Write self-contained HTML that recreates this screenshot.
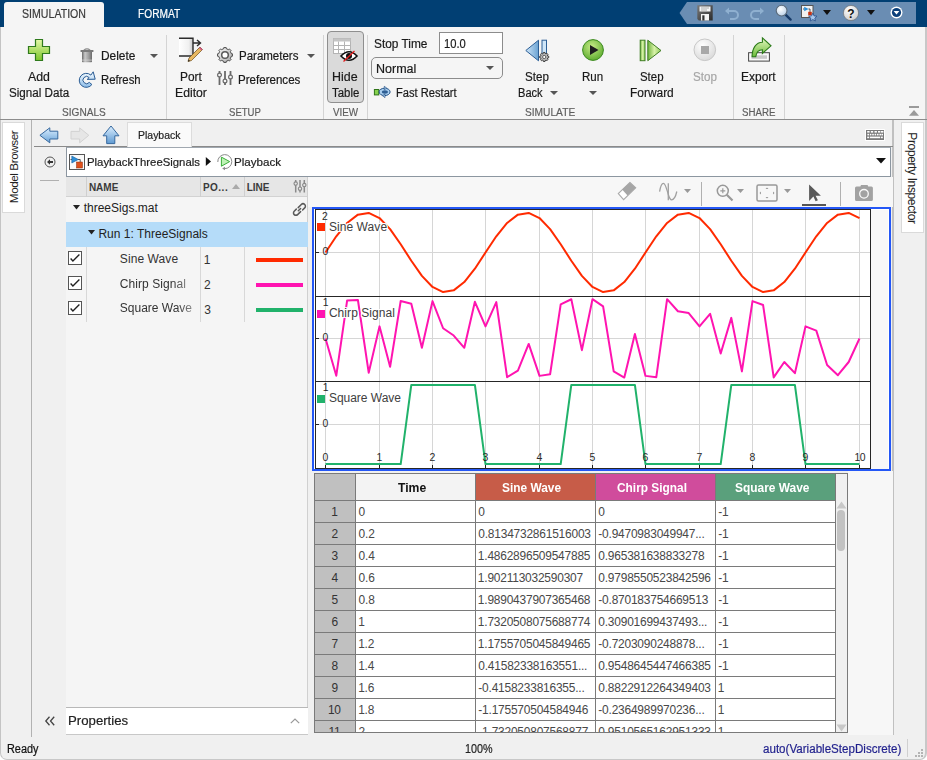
<!DOCTYPE html><html><head><meta charset="utf-8"><style>
html,body{margin:0;padding:0}
body{width:927px;height:760px;overflow:hidden;position:relative;background:#fff;font-family:"Liberation Sans", sans-serif}
.t{position:absolute;white-space:nowrap}
.b{position:absolute;box-sizing:border-box}
svg.b{overflow:visible}

</style></head><body>
<div class="b" style="left:0px;top:20px;width:927px;height:740px;background:#f0f0f0;border-left:1px solid #c4c4c4;border-right:2px solid #c8c8c8;border-bottom:1px solid #c8c8c8;border-radius:0 0 7px 7px"></div>
<div class="b" style="left:0px;top:0px;width:927px;height:27px;background:#013f73"></div>
<div class="b" style="left:4px;top:2px;width:100px;height:25px;background:#f5f5f5;border-radius:3px 3px 0 0"></div>
<div class="t" style="left:22.07px;top:6.11px;font-size:12.35px;line-height:16px;transform:scaleX(0.8587);transform-origin:0 0;color:#3a3a3a;font-weight:normal;-webkit-text-stroke:0.2px #3a3a3a;">SIMULATION</div>
<div class="t" style="left:138.28px;top:6.11px;font-size:12.35px;line-height:16px;transform:scaleX(0.8274);transform-origin:0 0;color:#ffffff;font-weight:normal;-webkit-text-stroke:0.2px #ffffff;">FORMAT</div>
<svg class="b" style="left:679px;top:1px" width="238" height="23" viewBox="0 0 238 23"><polygon points="0.5,12 8,1 237,1 237,23 8,23" fill="#6a8db3"/></svg>
<svg class="b" style="left:697px;top:5px" width="16" height="16" viewBox="0 0 16 16"><defs><linearGradient id="gsv" x1="0" y1="0" x2="1" y2="1"><stop offset="0" stop-color="#7a7a7a"/><stop offset="1" stop-color="#2a2a2a"/></linearGradient></defs><path d="M0.3,0.3 H15.7 V15.5 H1.8 L0.3,14Z" fill="url(#gsv)"/><rect x="2.5" y="1.5" width="11" height="5" fill="#f4f4f4"/><path d="M4,3 H12 M4,5 H10" stroke="#999" stroke-width=".8"/><rect x="4" y="9" width="8" height="6.5" fill="#f4f4f4"/><rect x="5.3" y="10.3" width="2.2" height="5.2" fill="#333"/></svg>
<svg class="b" style="left:724px;top:5px" width="16" height="16" viewBox="0 0 16 16"><path d="M4,6 H10 A4,4 0 0 1 10,14 H6" fill="none" stroke="#8fb0d0" stroke-width="2"/><path d="M1,6 L5,2.5 L5,9.5 Z" fill="#8fb0d0"/></svg>
<svg class="b" style="left:749px;top:5px" width="16" height="16" viewBox="0 0 16 16"><path d="M12,6 H6 A4,4 0 0 0 6,14 H10" fill="none" stroke="#8fb0d0" stroke-width="2"/><path d="M15,6 L11,2.5 L11,9.5 Z" fill="#8fb0d0"/></svg>
<svg class="b" style="left:775px;top:4px" width="17" height="17" viewBox="0 0 17 17"><defs><radialGradient id="gls" cx=".4" cy=".35" r=".7"><stop offset="0" stop-color="#ffffff"/><stop offset="1" stop-color="#b8d0e8"/></radialGradient></defs><path d="M9.8,9.8 L15.6,15.6" stroke="#163a68" stroke-width="2.4" stroke-linecap="round"/><circle cx="6.6" cy="6.6" r="5.4" fill="url(#gls)" stroke="#5a6a7a" stroke-width="1.1"/></svg>
<svg class="b" style="left:801px;top:5px" width="16" height="16" viewBox="0 0 16 16"><rect x="0.5" y="0.5" width="11.5" height="12" fill="#f2f2f2" stroke="#555"/><path d="M2,4 H3.5 M7.5,4 H9 V7" fill="none" stroke="#333" stroke-width=".8"/><path d="M3.2,1.8 L7.6,4 L3.2,6.2Z" fill="#2d8fd8"/><rect x="7.2" y="6.8" width="3.6" height="3.6" fill="#c83010"/><path d="M11.8,8.2 l1.3,2.7 2.9,.3 -2.2,2 .6,2.8 -2.6,-1.5 -2.6,1.5 .6,-2.8 -2.2,-2 2.9,-.3z" fill="#a8c8ec" stroke="#2a4f8a" stroke-width=".8"/></svg>
<svg class="b" style="left:823px;top:10px" width="8" height="5" viewBox="0 0 8 5"><path d="M0,0 H8 L4.0,5Z" fill="#111"/></svg>
<svg class="b" style="left:843px;top:5px" width="16" height="16" viewBox="0 0 16 16"><defs><radialGradient id="ghp" cx=".4" cy=".3" r=".8"><stop offset="0" stop-color="#ffffff"/><stop offset="1" stop-color="#c8c8c8"/></radialGradient></defs><circle cx="8" cy="8" r="7.6" fill="url(#ghp)" stroke="#666" stroke-width=".6"/><text x="8" y="12.5" font-family="Liberation Sans" font-weight="bold" font-size="12" text-anchor="middle" fill="#111">?</text></svg>
<svg class="b" style="left:867px;top:10px" width="8" height="5" viewBox="0 0 8 5"><path d="M0,0 H8 L4.0,5Z" fill="#111"/></svg>
<svg class="b" style="left:890px;top:6px" width="13" height="13" viewBox="0 0 13 13"><circle cx="6.5" cy="6.5" r="6" fill="#fff"/><circle cx="6.5" cy="6.5" r="4.6" fill="#0b3f7a"/><path d="M3.6,5 H9.4 L6.5,8.6Z" fill="#fff"/></svg>
<div class="b" style="left:1px;top:27px;width:924px;height:92px;background:#f5f5f5"></div>
<div class="b" style="left:0px;top:119px;width:927px;height:1px;background:#8c8c8c"></div>
<div class="b" style="left:166px;top:35px;width:1px;height:84px;background:#d4d4d4"></div>
<div class="b" style="left:323px;top:35px;width:1px;height:84px;background:#d4d4d4"></div>
<div class="b" style="left:367px;top:35px;width:1px;height:84px;background:#d4d4d4"></div>
<div class="b" style="left:733px;top:35px;width:1px;height:84px;background:#d4d4d4"></div>
<div class="b" style="left:784px;top:35px;width:1px;height:84px;background:#d4d4d4"></div>
<svg class="b" style="left:28px;top:39px" width="22" height="22" viewBox="0 0 22 22"><defs><linearGradient id="gp" x1="0" y1="0" x2="0" y2="1"><stop offset="0" stop-color="#e4f9a8"/><stop offset="1" stop-color="#7cc52a"/></linearGradient></defs><path d="M7.5,0.5 H14.5 V7.5 H21.5 V14.5 H14.5 V21.5 H7.5 V14.5 H0.5 V7.5 H7.5Z" fill="url(#gp)" stroke="#2f7a1c" stroke-width="1.2"/></svg>
<div class="t" style="left:28.40px;top:68.61px;font-size:12.65px;line-height:16px;transform:scaleX(0.9758);transform-origin:0 0;color:#1a1a1a;font-weight:normal;-webkit-text-stroke:0.2px #1a1a1a;">Add</div>
<div class="t" style="left:8.62px;top:84.61px;font-size:12.65px;line-height:16px;transform:scaleX(0.9205);transform-origin:0 0;color:#1a1a1a;font-weight:normal;-webkit-text-stroke:0.2px #1a1a1a;">Signal Data</div>
<svg class="b" style="left:80px;top:47px" width="14" height="16" viewBox="0 0 14 16"><defs><linearGradient id="gt" x1="0" y1="0" x2="1" y2="0"><stop offset="0" stop-color="#6a6a6a"/><stop offset=".3" stop-color="#c8c8c8"/><stop offset=".7" stop-color="#9a9a9a"/><stop offset="1" stop-color="#6a6a6a"/></linearGradient></defs><path d="M3.8,3.2 Q7,0.6 10.2,3.2" fill="none" stroke="#8a8a8a" stroke-width="1.1"/><rect x="0.4" y="3" width="13.2" height="2" rx="0.8" fill="#7a7a7a"/><path d="M2,5 H12 V14.6 Q12,15.3 11.3,15.3 H2.7 Q2,15.3 2,14.6Z" fill="url(#gt)"/><rect x="2" y="12.6" width="10" height="1" fill="#d8d8d8" opacity=".7"/></svg>
<div class="t" style="left:100.95px;top:47.61px;font-size:12.65px;line-height:16px;transform:scaleX(0.9421);transform-origin:0 0;color:#1a1a1a;font-weight:normal;-webkit-text-stroke:0.2px #1a1a1a;">Delete</div>
<svg class="b" style="left:150px;top:54px" width="8" height="4" viewBox="0 0 8 4"><path d="M0,0 H8 L4.0,4Z" fill="#555"/></svg>
<svg class="b" style="left:79px;top:71px" width="17" height="16" viewBox="0 0 17 16"><defs><linearGradient id="gr" x1="0" y1="0" x2="0" y2="1"><stop offset="0" stop-color="#f6fcff"/><stop offset="1" stop-color="#8dbde8"/></linearGradient></defs><path d="M11.9,4.1 A7,7 0 1 0 12.9,13.5 L10.3,11.4 A3.6,3.6 0 1 1 10.2,6.6 L8.2,8.4 L16.2,8.2 L14.2,0.8 Z" fill="url(#gr)" stroke="#2a5c94" stroke-width="1"/></svg>
<div class="t" style="left:101.00px;top:71.61px;font-size:12.65px;line-height:16px;transform:scaleX(0.8944);transform-origin:0 0;color:#1a1a1a;font-weight:normal;-webkit-text-stroke:0.2px #1a1a1a;">Refresh</div>
<div class="t" style="left:61.90px;top:104.47px;font-size:11.63px;line-height:15px;transform:scaleX(0.8681);transform-origin:0 0;color:#5e5e5e;font-weight:normal;-webkit-text-stroke:0.2px #5e5e5e;">SIGNALS</div>
<svg class="b" style="left:178px;top:37px" width="26" height="26" viewBox="0 0 26 26"><defs><linearGradient id="gd" x1="0" y1="0" x2="1" y2="0"><stop offset="0" stop-color="#ffffff"/><stop offset=".7" stop-color="#f0f0f0"/><stop offset="1" stop-color="#c8c8c8"/></linearGradient></defs><rect x="1" y="1" width="14" height="18" fill="url(#gd)"/><path d="M1,1.2 H15 V19 H1" fill="none" stroke="#2b2b2b" stroke-width="1.4"/><path d="M15,6 H22 M19,3 L22.5,6 L19,9" fill="none" stroke="#2b2b2b" stroke-width="1.4"/><path d="M10,24.5 L11,21 L22,10 L24.5,12.5 L13.5,23.5Z" fill="#e8b860" stroke="#6b4a1a" stroke-width=".7"/><path d="M21,11 L22,10 L24.5,12.5 L23.5,13.5Z" fill="#d0508a"/><path d="M10,24.5 L10.6,22.6 L12,24Z" fill="#222"/></svg>
<div class="t" style="left:180.05px;top:68.61px;font-size:12.65px;line-height:16px;transform:scaleX(0.9399);transform-origin:0 0;color:#1a1a1a;font-weight:normal;-webkit-text-stroke:0.2px #1a1a1a;">Port</div>
<div class="t" style="left:175.02px;top:84.61px;font-size:12.65px;line-height:16px;transform:scaleX(0.9665);transform-origin:0 0;color:#1a1a1a;font-weight:normal;-webkit-text-stroke:0.2px #1a1a1a;">Editor</div>
<svg class="b" style="left:217px;top:47px" width="16" height="16" viewBox="0 0 16 16"><defs><linearGradient id="gg" x1="0" y1="0" x2="1" y2="1"><stop offset="0" stop-color="#fafafa"/><stop offset="1" stop-color="#a8a8a8"/></linearGradient></defs><path d="M6.65,1.74 L6.77,0.60 L9.23,0.60 L9.35,1.74 L11.47,2.62 L12.36,1.90 L14.10,3.64 L13.38,4.53 L14.26,6.65 L15.40,6.77 L15.40,9.23 L14.26,9.35 L13.38,11.47 L14.10,12.36 L12.36,14.10 L11.47,13.38 L9.35,14.26 L9.23,15.40 L6.77,15.40 L6.65,14.26 L4.53,13.38 L3.64,14.10 L1.90,12.36 L2.62,11.47 L1.74,9.35 L0.60,9.23 L0.60,6.77 L1.74,6.65 L2.62,4.53 L1.90,3.64 L3.64,1.90 L4.53,2.62Z" fill="url(#gg)" stroke="#3a3a3a" stroke-width="0.9"/><circle cx="8" cy="8" r="3.3" fill="#fff" stroke="#5a5a5a" stroke-width="1.5"/></svg>
<div class="t" style="left:239.48px;top:47.61px;font-size:12.65px;line-height:16px;transform:scaleX(0.9098);transform-origin:0 0;color:#1a1a1a;font-weight:normal;-webkit-text-stroke:0.2px #1a1a1a;">Parameters</div>
<svg class="b" style="left:307px;top:54px" width="8" height="4" viewBox="0 0 8 4"><path d="M0,0 H8 L4.0,4Z" fill="#555"/></svg>
<svg class="b" style="left:217px;top:70px" width="16" height="16" viewBox="0 0 16 16"><g stroke="#6a6a6a" stroke-width="1.8"><path d="M2.5,1 V15 M8,1 V15 M13.5,1 V15"/></g><g fill="#f5f5f5" stroke="#6a6a6a" stroke-width="1.2"><circle cx="2.5" cy="5" r="1.9"/><circle cx="8" cy="11" r="1.9"/><circle cx="13.5" cy="7" r="1.9"/></g></svg>
<div class="t" style="left:238.37px;top:71.61px;font-size:12.65px;line-height:16px;transform:scaleX(0.9151);transform-origin:0 0;color:#1a1a1a;font-weight:normal;-webkit-text-stroke:0.2px #1a1a1a;">Preferences</div>
<div class="t" style="left:229.22px;top:104.47px;font-size:11.63px;line-height:15px;transform:scaleX(0.8227);transform-origin:0 0;color:#5e5e5e;font-weight:normal;-webkit-text-stroke:0.2px #5e5e5e;">SETUP</div>
<div class="b" style="left:327px;top:31px;width:37px;height:72px;background:#dadada;border:1px solid #8f8f8f;border-radius:4px"></div>
<svg class="b" style="left:333px;top:38px" width="26" height="24" viewBox="0 0 26 24"><rect x="0.5" y="0.5" width="17" height="15" fill="#fff" stroke="#b4b4b4"/><rect x="0.5" y="0.5" width="17" height="3" fill="#c4c4c4"/><path d="M0.5,7.5 H17.5 M0.5,11.5 H17.5 M5.5,3.5 V15.5 M11.5,3.5 V15.5" stroke="#b4b4b4" stroke-width="1"/><path d="M8,18 Q16,9.5 24,18 Q16,26.5 8,18Z" fill="#fff" stroke="#111" stroke-width="1.6"/><circle cx="16" cy="18" r="3" fill="#111"/><path d="M10.5,23.5 L21.5,13" stroke="#e31e1e" stroke-width="1.3"/></svg>
<div class="t" style="left:332.31px;top:68.61px;font-size:12.65px;line-height:16px;transform:scaleX(0.9834);transform-origin:0 0;color:#1a1a1a;font-weight:normal;-webkit-text-stroke:0.2px #1a1a1a;">Hide</div>
<div class="t" style="left:331.67px;top:84.61px;font-size:12.65px;line-height:16px;transform:scaleX(0.9028);transform-origin:0 0;color:#1a1a1a;font-weight:normal;-webkit-text-stroke:0.2px #1a1a1a;">Table</div>
<div class="t" style="left:332.90px;top:104.47px;font-size:11.63px;line-height:15px;transform:scaleX(0.8465);transform-origin:0 0;color:#5e5e5e;font-weight:normal;-webkit-text-stroke:0.2px #5e5e5e;">VIEW</div>
<div class="t" style="left:373.81px;top:35.61px;font-size:12.65px;line-height:16px;transform:scaleX(0.9396);transform-origin:0 0;color:#1a1a1a;font-weight:normal;-webkit-text-stroke:0.2px #1a1a1a;">Stop Time</div>
<div class="b" style="left:439px;top:32px;width:64px;height:22px;background:#fff;border:1px solid #8c8c8c"></div>
<div class="t" style="left:444.30px;top:35.61px;font-size:12.65px;line-height:16px;transform:scaleX(0.8859);transform-origin:0 0;color:#1a1a1a;font-weight:normal;-webkit-text-stroke:0.2px #1a1a1a;">10.0</div>
<div class="b" style="left:371px;top:57px;width:132px;height:22px;background:#f5f5f5;border:1px solid #8c8c8c;border-radius:5px"></div>
<div class="t" style="left:375.60px;top:61.01px;font-size:12.65px;line-height:16px;transform:scaleX(0.9885);transform-origin:0 0;color:#1a1a1a;font-weight:normal;-webkit-text-stroke:0.2px #1a1a1a;">Normal</div>
<svg class="b" style="left:486px;top:66px" width="8" height="4" viewBox="0 0 8 4"><path d="M0,0 H8 L4.0,4Z" fill="#555"/></svg>
<svg class="b" style="left:373px;top:85px" width="18" height="14" viewBox="0 0 18 14"><rect x="1.4" y="4.5" width="4.4" height="5.4" fill="#86d24e" stroke="#2f7418" stroke-width="1"/><ellipse cx="11.6" cy="6.9" rx="5.5" ry="3.7" fill="#a8cdee" stroke="#1f4f86" stroke-width="1"/><ellipse cx="11.9" cy="7" rx="3" ry="1.7" fill="#2f5f95"/><path d="M11.3,1.3 L13.8,3.2 L11.3,4.6Z" fill="#c8e2f6" stroke="#1f4f86" stroke-width=".7"/><path d="M12,12.6 L9.5,10.7 L12,9.3Z" fill="#c8e2f6" stroke="#1f4f86" stroke-width=".7"/></svg>
<div class="t" style="left:395.81px;top:85.01px;font-size:12.65px;line-height:16px;transform:scaleX(0.8808);transform-origin:0 0;color:#1a1a1a;font-weight:normal;-webkit-text-stroke:0.2px #1a1a1a;">Fast Restart</div>
<svg class="b" style="left:525px;top:39px" width="24" height="24" viewBox="0 0 24 24"><defs><linearGradient id="gb" x1="0" y1="0" x2="1" y2="0"><stop offset="0" stop-color="#cfe6f8"/><stop offset="1" stop-color="#6aa2d2"/></linearGradient></defs><path d="M13.5,1.2 V21.8 L0.8,11.5Z" fill="url(#gb)" stroke="#2d5f96" stroke-width="1"/><rect x="17" y="1.2" width="4.5" height="14.5" fill="#cfe6f8" stroke="#2d5f96" stroke-width="1"/><path d="M18.38,14.39 L18.39,13.47 L20.01,13.47 L20.02,14.39 L21.17,14.87 L21.83,14.23 L22.97,15.37 L22.33,16.03 L22.81,17.18 L23.73,17.19 L23.73,18.81 L22.81,18.82 L22.33,19.97 L22.97,20.63 L21.83,21.77 L21.17,21.13 L20.02,21.61 L20.01,22.53 L18.39,22.53 L18.38,21.61 L17.23,21.13 L16.57,21.77 L15.43,20.63 L16.07,19.97 L15.59,18.82 L14.67,18.81 L14.67,17.19 L15.59,17.18 L16.07,16.03 L15.43,15.37 L16.57,14.23 L17.23,14.87Z" fill="#b8b8b8" stroke="#333" stroke-width="0.9"/><circle cx="19.2" cy="18" r="1.6" fill="#fff" stroke="#444" stroke-width=".8"/></svg>
<div class="t" style="left:524.62px;top:68.61px;font-size:12.65px;line-height:16px;transform:scaleX(0.9159);transform-origin:0 0;color:#1a1a1a;font-weight:normal;-webkit-text-stroke:0.2px #1a1a1a;">Step</div>
<div class="t" style="left:518.41px;top:84.61px;font-size:12.65px;line-height:16px;transform:scaleX(0.8758);transform-origin:0 0;color:#1a1a1a;font-weight:normal;-webkit-text-stroke:0.2px #1a1a1a;">Back</div>
<svg class="b" style="left:549.5px;top:91px" width="8" height="4" viewBox="0 0 8 4"><path d="M0,0 H8 L4.0,4Z" fill="#555"/></svg>
<svg class="b" style="left:582px;top:39px" width="22" height="22" viewBox="0 0 22 22"><defs><radialGradient id="grn" cx=".45" cy=".35" r=".7"><stop offset="0" stop-color="#c8ec88"/><stop offset="1" stop-color="#58a82a"/></radialGradient></defs><circle cx="11" cy="11" r="10.4" fill="url(#grn)" stroke="#3b8a1e" stroke-width="1"/><path d="M8,6 L16.5,11 L8,16Z" fill="#1e1e1e"/></svg>
<div class="t" style="left:581.78px;top:68.61px;font-size:12.65px;line-height:16px;transform:scaleX(0.9125);transform-origin:0 0;color:#1a1a1a;font-weight:normal;-webkit-text-stroke:0.2px #1a1a1a;">Run</div>
<svg class="b" style="left:589px;top:91px" width="8" height="4" viewBox="0 0 8 4"><path d="M0,0 H8 L4.0,4Z" fill="#555"/></svg>
<svg class="b" style="left:639px;top:39px" width="23" height="23" viewBox="0 0 23 23"><defs><linearGradient id="gsf" x1="0" y1="0" x2="1" y2="0"><stop offset="0" stop-color="#6fb33c"/><stop offset=".5" stop-color="#d8f2a8"/><stop offset="1" stop-color="#8fcb5a"/></linearGradient></defs><rect x="1.2" y="1.2" width="4.8" height="20.5" fill="url(#gsf)" stroke="#3f7d24" stroke-width="1"/><path d="M8.8,1.2 V21.7 L22,11.5Z" fill="url(#gsf)" stroke="#3f7d24" stroke-width="1"/></svg>
<div class="t" style="left:639.63px;top:68.61px;font-size:12.65px;line-height:16px;transform:scaleX(0.9038);transform-origin:0 0;color:#1a1a1a;font-weight:normal;-webkit-text-stroke:0.2px #1a1a1a;">Step</div>
<div class="t" style="left:629.55px;top:84.61px;font-size:12.65px;line-height:16px;transform:scaleX(0.9436);transform-origin:0 0;color:#1a1a1a;font-weight:normal;-webkit-text-stroke:0.2px #1a1a1a;">Forward</div>
<svg class="b" style="left:693px;top:38px" width="24" height="24" viewBox="0 0 24 24"><defs><radialGradient id="gst" cx=".4" cy=".3" r=".8"><stop offset="0" stop-color="#ffffff"/><stop offset="1" stop-color="#d5d5d5"/></radialGradient></defs><circle cx="11.8" cy="11.8" r="10.8" fill="url(#gst)" stroke="#c8c8c8" stroke-width="1"/><rect x="8" y="8" width="8" height="8" fill="#a8a8a8"/></svg>
<div class="t" style="left:693.12px;top:68.61px;font-size:12.65px;line-height:16px;transform:scaleX(0.9199);transform-origin:0 0;color:#a6a6a6;font-weight:normal;-webkit-text-stroke:0.2px #a6a6a6;">Stop</div>
<svg class="b" style="left:747px;top:37px" width="25" height="25" viewBox="0 0 25 25"><defs><linearGradient id="gex" x1="0" y1="0" x2="0" y2="1"><stop offset="0" stop-color="#e4f8c0"/><stop offset="1" stop-color="#6cbc3a"/></linearGradient></defs><rect x="1.6" y="15.7" width="20.8" height="8.4" fill="#fafafa" stroke="#444" stroke-width="1"/><rect x="4.5" y="18.3" width="15.5" height="3.5" fill="#c8c8c8"/><path d="M5.1,19.7 C5.1,11.5 9,5.2 15.4,5.2 V0.9 L24,8.8 L15.4,16.5 V12.8 C11.5,12.8 9.5,15 8.8,19.7 Z" fill="url(#gex)" stroke="#2a7a18" stroke-width="1.1"/></svg>
<div class="t" style="left:741.44px;top:68.61px;font-size:12.65px;line-height:16px;transform:scaleX(0.9490);transform-origin:0 0;color:#1a1a1a;font-weight:normal;-webkit-text-stroke:0.2px #1a1a1a;">Export</div>
<div class="t" style="left:525.09px;top:104.47px;font-size:11.63px;line-height:15px;transform:scaleX(0.8760);transform-origin:0 0;color:#5e5e5e;font-weight:normal;-webkit-text-stroke:0.2px #5e5e5e;">SIMULATE</div>
<div class="t" style="left:742.21px;top:104.47px;font-size:11.63px;line-height:15px;transform:scaleX(0.8343);transform-origin:0 0;color:#5e5e5e;font-weight:normal;-webkit-text-stroke:0.2px #5e5e5e;">SHARE</div>
<svg class="b" style="left:909px;top:106px" width="10" height="10" viewBox="0 0 10 10"><rect x="0" y="0" width="10" height="2" fill="#9a9a9a"/><path d="M0,9.8 L5,4 L10,9.8Z" fill="#9a9a9a"/></svg>
<div class="b" style="left:2px;top:122px;width:23px;height:91px;background:#fff;border:1px solid #dadada"></div>
<div class="t" style="left:13.8px;top:167.2px;transform:translate(-50%,-50%) rotate(-90deg);font-size:11.72px;letter-spacing:-0.450px;line-height:14px;color:#222">Model Browser</div>
<div class="b" style="left:31px;top:120px;width:1px;height:617px;background:#b2b2b2"></div>
<div class="b" style="left:892px;top:120px;width:2px;height:615px;background:#c0c0c0"></div>
<div class="b" style="left:901px;top:122px;width:23px;height:111px;background:#fff;border:1px solid #dadada"></div>
<div class="t" style="left:912.3px;top:178.3px;transform:translate(-50%,-50%) rotate(90deg);font-size:12.00px;letter-spacing:-0.373px;line-height:14px;color:#222">Property Inspector</div>
<div class="b" style="left:34px;top:146px;width:859px;height:1px;background:#8a8a8a"></div>
<svg class="b" style="left:39px;top:127px" width="20" height="17" viewBox="0 0 20 17"><defs><linearGradient id="ga" x1="0" y1="0" x2="0" y2="1"><stop offset="0" stop-color="#dcefff"/><stop offset="1" stop-color="#6aa4d8"/></linearGradient></defs><path d="M0.9,8.3 L10.8,0.8 V4.2 H18.8 V12 H10.8 V15.8Z" fill="url(#ga)" stroke="#36689e" stroke-width="1"/></svg>
<svg class="b" style="left:70px;top:127px" width="20" height="17" viewBox="0 0 20 17"><path d="M18.8,8.3 L9.7,0.9 V4.4 H1 V12 H9.7 V15.8Z" fill="#e6e6e6" stroke="#d2d2d2" stroke-width="1"/></svg>
<svg class="b" style="left:102px;top:125px" width="18" height="19" viewBox="0 0 18 19"><defs><linearGradient id="gu" x1="0" y1="0" x2="0" y2="1"><stop offset="0" stop-color="#dcefff"/><stop offset="1" stop-color="#5f9ad2"/></linearGradient></defs><path d="M9,1 L17,10.8 H12.8 V18.6 H4.7 V10.8 H1Z" fill="url(#gu)" stroke="#36689e" stroke-width="1"/></svg>
<div class="b" style="left:127px;top:122px;width:65px;height:25px;background:#fafafa;border:1px solid #dcdcdc;border-bottom:none"></div>
<div class="t" style="left:137.66px;top:127.97px;font-size:11.34px;line-height:15px;transform:scaleX(0.9242);transform-origin:0 0;color:#222;font-weight:normal;-webkit-text-stroke:0.2px #222;">Playback</div>
<svg class="b" style="left:865px;top:129px" width="20" height="12" viewBox="0 0 20 12"><rect x="0" y="0" width="20" height="12" rx="1" fill="#fff"/><rect x="1" y="1" width="18" height="10" fill="#7a7a7a"/><rect x="2.2" y="2" width="2.4" height="1.6" fill="#fff"/><rect x="5.8" y="2" width="2.4" height="1.6" fill="#fff"/><rect x="9.5" y="2" width="2.4" height="1.6" fill="#fff"/><rect x="13" y="2" width="2.4" height="1.6" fill="#fff"/><rect x="16" y="2" width="2.4" height="1.6" fill="#fff"/><rect x="2.4" y="4.8" width="1.6" height="1.6" fill="#fff"/><rect x="4.8" y="4.8" width="1.6" height="1.6" fill="#fff"/><rect x="7.2" y="4.8" width="1.6" height="1.6" fill="#fff"/><rect x="9.6" y="4.8" width="1.6" height="1.6" fill="#fff"/><rect x="12" y="4.8" width="1.6" height="1.6" fill="#fff"/><rect x="14.4" y="4.8" width="1.6" height="1.6" fill="#fff"/><rect x="16.4" y="4.8" width="1.6" height="1.6" fill="#fff"/><rect x="2.2" y="7.6" width="2" height="1.6" fill="#fff"/><rect x="5" y="7.6" width="10" height="1.6" fill="#fff"/><rect x="15.8" y="7.6" width="2" height="1.6" fill="#fff"/></svg>
<svg class="b" style="left:44px;top:156px" width="12" height="12" viewBox="0 0 12 12"><circle cx="6" cy="6" r="5" fill="#f0f0f0" stroke="#555" stroke-width="1"/><path d="M3,6 L6,3.2 V4.9 H9 V7.1 H6 V8.8Z" fill="#333"/></svg>
<div class="b" style="left:40px;top:180px;width:19px;height:1px;background:#b0b0b0"></div>
<div class="b" style="left:66px;top:147px;width:825px;height:30px;background:#fff;border:1px solid #8c96a0;border-top-color:#a0a8b0"></div>
<svg class="b" style="left:69px;top:154px" width="16" height="16" viewBox="0 0 16 16"><rect x="0.5" y="0.5" width="15" height="15" fill="#fafafa" stroke="#555"/><path d="M1.5,5.5 H3 M9,5.5 H11.2 V8.5" fill="none" stroke="#444" stroke-width=".9"/><path d="M2.8,2 L9.3,5.5 L2.8,9Z" fill="#2d8fd8" stroke="#1a5fa0" stroke-width=".6"/><rect x="7.5" y="8" width="6" height="6" fill="#e0501a" stroke="#8a2a0a" stroke-width=".5"/></svg>
<div class="t" style="left:87.09px;top:153.87px;font-size:11.63px;line-height:15px;transform:scaleX(0.9764);transform-origin:0 0;color:#222;font-weight:normal;-webkit-text-stroke:0.2px #222;">PlaybackThreeSignals</div>
<svg class="b" style="left:205px;top:156px" width="7" height="11" viewBox="0 0 7 11"><path d="M0.8,0.9 L6,5.5 L0.8,10Z" fill="#111"/></svg>
<svg class="b" style="left:217px;top:154px" width="16" height="16" viewBox="0 0 16 16"><path d="M0.8,8 A7,7 0 1 1 7.5,14.6" fill="none" stroke="#8a8a8a" stroke-width="1"/><path d="M5.2,14.6 L8,12.8 L8,16.2Z" fill="#8a8a8a"/><path d="M4.4,3.1 L12.7,7.6 L4.4,12.2Z" fill="#bff3b6" stroke="#3cae3c" stroke-width="1"/></svg>
<div class="t" style="left:233.67px;top:153.87px;font-size:11.63px;line-height:15px;transform:scaleX(0.9983);transform-origin:0 0;color:#222;font-weight:normal;-webkit-text-stroke:0.2px #222;">Playback</div>
<svg class="b" style="left:876px;top:158px" width="10" height="6" viewBox="0 0 10 6"><path d="M0,0 H10 L5,5.5Z" fill="#111"/></svg>
<div class="b" style="left:66px;top:177px;width:242px;height:558px;background:#f5f5f5"></div>
<div class="b" style="left:66px;top:177px;width:242px;height:20px;background:#e6e6e6;border-bottom:1px solid #d2d2d2"></div>
<div class="b" style="left:86px;top:177px;width:1px;height:20px;background:#cfcfcf"></div>
<div class="b" style="left:200px;top:177px;width:1px;height:20px;background:#cfcfcf"></div>
<div class="b" style="left:244px;top:177px;width:1px;height:20px;background:#cfcfcf"></div>
<div class="t" style="left:88.90px;top:181.03px;font-size:10.00px;line-height:13px;letter-spacing:0.000px;color:#3a3a3a;font-weight:bold;">NAME</div>
<div class="t" style="left:202.90px;top:181.03px;font-size:10.00px;line-height:13px;letter-spacing:0.500px;color:#3a3a3a;font-weight:bold;">PO...</div>
<svg class="b" style="left:232px;top:184px" width="8" height="5" viewBox="0 0 8 5"><path d="M0,5 H8 L4.0,0Z" fill="#aaa"/></svg>
<div class="t" style="left:246.70px;top:181.03px;font-size:10.00px;line-height:13px;letter-spacing:-0.033px;color:#3a3a3a;font-weight:bold;">LINE</div>
<svg class="b" style="left:293px;top:179px" width="14" height="15" viewBox="0 0 14 15"><g stroke="#8a8a8a" stroke-width="1.5"><path d="M2.7,1 V13.6 M7,1 V13.6 M11.3,1 V13.6"/></g><g fill="#e6e6e6" stroke="#8a8a8a" stroke-width="1.1"><circle cx="2.7" cy="4.6" r="1.7"/><circle cx="7" cy="9.7" r="1.7"/><circle cx="11.3" cy="6.1" r="1.7"/></g></svg>
<div class="b" style="left:307px;top:177px;width:1px;height:558px;background:#d0d0d0"></div>
<svg class="b" style="left:73px;top:205px" width="7" height="4.5" viewBox="0 0 7 4.5"><path d="M0,0 H7 L3.5,4.5Z" fill="#222"/></svg>
<div class="t" style="left:83.66px;top:200.44px;font-size:12.00px;line-height:16px;letter-spacing:0.010px;color:#222;font-weight:normal;">threeSigs.mat</div>
<svg class="b" style="left:292px;top:202px" width="15" height="15" viewBox="0 0 15 15"><g fill="none" stroke="#5a5a5a" stroke-width="1.5" stroke-linecap="round"><path d="M6.2,5.6 L9.3,2.5 A2.4,2.4 0 0 1 12.7,5.9 L10.6,8"/><path d="M8.6,9.6 L5.6,12.6 A2.4,2.4 0 0 1 2.2,9.2 L4.3,7.1"/><path d="M6.3,8.8 L8.6,6.5"/></g></svg>
<div class="b" style="left:66px;top:222px;width:242px;height:25px;background:#b5dcf9"></div>
<svg class="b" style="left:88px;top:230px" width="7" height="4.5" viewBox="0 0 7 4.5"><path d="M0,0 H7 L3.5,4.5Z" fill="#222"/></svg>
<div class="t" style="left:98.44px;top:225.54px;font-size:12.00px;line-height:16px;letter-spacing:0.008px;color:#222;font-weight:normal;">Run 1: ThreeSignals</div>
<div class="b" style="left:86px;top:247px;width:1px;height:75px;background:#d8d8d8"></div>
<div class="b" style="left:200px;top:247px;width:1px;height:75px;background:#d8d8d8"></div>
<div class="b" style="left:244px;top:247px;width:1px;height:75px;background:#d8d8d8"></div>
<svg class="b" style="left:68px;top:251px" width="14" height="14" viewBox="0 0 14 14"><rect x="0.5" y="0.5" width="13" height="13" fill="#fff" stroke="#555"/><path d="M2.6,7.5 L4.9,9.9 L11.4,3.6" fill="none" stroke="#222" stroke-width="1.4"/></svg>
<div class="t" style="left:119.80px;top:250.64px;font-size:12.00px;line-height:16px;letter-spacing:0.087px;color:#333;font-weight:normal;">Sine Wave</div>
<div class="t" style="left:203.74px;top:251.84px;font-size:12.00px;line-height:16px;letter-spacing:0.000px;color:#333;font-weight:normal;">1</div>
<div class="b" style="left:256px;top:258px;width:47px;height:4px;background:#ff2a00"></div>
<svg class="b" style="left:68px;top:276px" width="14" height="14" viewBox="0 0 14 14"><rect x="0.5" y="0.5" width="13" height="13" fill="#fff" stroke="#555"/><path d="M2.6,7.5 L4.9,9.9 L11.4,3.6" fill="none" stroke="#222" stroke-width="1.4"/></svg>
<div class="t" style="left:119.80px;top:275.64px;font-size:12.00px;line-height:16px;letter-spacing:0.076px;color:#333;font-weight:normal;-webkit-mask-image:linear-gradient(90deg,#000 0,#000 52px,rgba(0,0,0,.6) 66px);">Chirp Signal</div>
<div class="t" style="left:204.10px;top:276.84px;font-size:12.00px;line-height:16px;letter-spacing:0.000px;color:#333;font-weight:normal;">2</div>
<div class="b" style="left:256px;top:283px;width:47px;height:4px;background:#ff14b0"></div>
<svg class="b" style="left:68px;top:301px" width="14" height="14" viewBox="0 0 14 14"><rect x="0.5" y="0.5" width="13" height="13" fill="#fff" stroke="#555"/><path d="M2.6,7.5 L4.9,9.9 L11.4,3.6" fill="none" stroke="#222" stroke-width="1.4"/></svg>
<div class="t" style="left:119.80px;top:300.44px;font-size:12.00px;line-height:16px;letter-spacing:-0.006px;color:#333;font-weight:normal;-webkit-mask-image:linear-gradient(90deg,#000 0,#000 56px,rgba(0,0,0,.55) 72px);">Square Wave</div>
<div class="t" style="left:204.22px;top:301.84px;font-size:12.00px;line-height:16px;letter-spacing:0.000px;color:#333;font-weight:normal;">3</div>
<div class="b" style="left:256px;top:308px;width:47px;height:4px;background:#21b26b"></div>
<div class="b" style="left:66px;top:707px;width:242px;height:28px;background:#fff;border-top:1px solid #b8b8b8;border-bottom:1px solid #c8c8c8"></div>
<div class="t" style="left:68.34px;top:712.11px;font-size:13.52px;line-height:18px;transform:scaleX(0.9764);transform-origin:0 0;color:#222;font-weight:normal;-webkit-text-stroke:0.2px #222;">Properties</div>
<svg class="b" style="left:290px;top:718px" width="10" height="6" viewBox="0 0 10 6"><path d="M0.8,5.2 L5,1 L9.2,5.2" fill="none" stroke="#999" stroke-width="1.2"/></svg>
<svg class="b" style="left:45px;top:716px" width="10" height="10" viewBox="0 0 10 10"><path d="M4.5,0.8 L0.8,5 L4.5,9.2 M9.2,0.8 L5.5,5 L9.2,9.2" fill="none" stroke="#444" stroke-width="1.3"/></svg>
<div class="b" style="left:308px;top:177px;width:585px;height:30px;background:#f7f7f7"></div>
<svg class="b" style="left:618px;top:182px" width="18" height="18" viewBox="0 0 18 18"><path d="M11.9,0.4 L17.7,5.7 L5.6,17.6 L0.3,11.5Z" fill="#fff" stroke="#aaa" stroke-width="1.1"/><path d="M11.9,0.4 L17.7,5.7 L9.5,13.6 L4.2,7.6Z" fill="#a6a6a6"/></svg>
<svg class="b" style="left:659px;top:182px" width="19" height="20" viewBox="0 0 19 20"><path d="M0.6,9.6 C1.5,4 3,1.3 4.4,1.3 C6.5,1.3 8.2,9 9.3,12.5 C10.3,16 11,17.8 12.6,17.8 C15,17.8 17,13 17.8,9.5" fill="none" stroke="#a0a0a0" stroke-width="1.3"/><path d="M9.3,1.2 V18.3" stroke="#a0a0a0" stroke-width="1.3"/></svg>
<svg class="b" style="left:684px;top:189px" width="7" height="4" viewBox="0 0 7 4"><path d="M0,0 H7 L3.5,4Z" fill="#999"/></svg>
<div class="b" style="left:701px;top:182px;width:1px;height:24px;background:#b0b0b0"></div>
<svg class="b" style="left:716px;top:184px" width="18" height="18" viewBox="0 0 18 18"><circle cx="6.8" cy="6.8" r="5.5" fill="none" stroke="#999" stroke-width="1.5"/><path d="M4.3,6.8 H9.3 M6.8,4.3 V9.3" stroke="#999" stroke-width="1.2"/><path d="M10.8,10.8 L16.5,16.5" stroke="#999" stroke-width="2.2"/></svg>
<svg class="b" style="left:737px;top:189px" width="7" height="4" viewBox="0 0 7 4"><path d="M0,0 H7 L3.5,4Z" fill="#999"/></svg>
<svg class="b" style="left:756px;top:184px" width="22" height="18" viewBox="0 0 22 18"><rect x="1" y="1" width="20" height="16" rx="1.5" fill="none" stroke="#999" stroke-width="1.5"/><path d="M11,3.5 l-1.5,1.5 h3z M11,14.5 l-1.5,-1.5 h3z M3.5,9 l1.5,-1.5 v3z M18.5,9 l-1.5,-1.5 v3z" fill="#999"/></svg>
<svg class="b" style="left:784px;top:189px" width="7" height="4" viewBox="0 0 7 4"><path d="M0,0 H7 L3.5,4Z" fill="#999"/></svg>
<svg class="b" style="left:808px;top:184px" width="14" height="18" viewBox="0 0 14 18"><path d="M1.1,0.5 L12.9,11.7 H7.6 L9.9,16.2 L7.6,17.2 L5.4,12.6 L1.1,16.9Z" fill="#5a5a5a"/></svg>
<div class="b" style="left:802px;top:204px;width:24px;height:2px;background:#555"></div>
<div class="b" style="left:840px;top:182px;width:1px;height:24px;background:#b0b0b0"></div>
<svg class="b" style="left:855px;top:184px" width="18" height="17" viewBox="0 0 18 17"><path d="M5.4,2.6 L6,0.9 H12.6 L13.2,2.6 H16.4 A1.5,1.5 0 0 1 17.9,4.1 V15.4 A1.5,1.5 0 0 1 16.4,16.9 H1.5 A1.5,1.5 0 0 1 0,15.4 V4.1 A1.5,1.5 0 0 1 1.5,2.6Z" fill="#a2a2a2"/><circle cx="9" cy="9.8" r="4.3" fill="none" stroke="#fafafa" stroke-width="1.3"/></svg>
<div class="b" style="left:312px;top:207px;width:579px;height:264px;background:#f8f8f8;border:2px solid #2457f6"></div>
<svg class="b" style="left:0;top:0" width="927" height="760" viewBox="0 0 927 760"><rect x="314" y="209" width="557" height="260" fill="#fff"/><rect x="871" y="209" width="18" height="260" fill="#f8f8f8"/><rect x="871" y="209" width="18" height="1" fill="#fff"/><rect x="888" y="209" width="1" height="260" fill="#fff"/><rect x="325" y="209" width="1" height="87" fill="#d6d6d6"/><rect x="379" y="209" width="1" height="87" fill="#d6d6d6"/><rect x="432" y="209" width="1" height="87" fill="#d6d6d6"/><rect x="485" y="209" width="1" height="87" fill="#d6d6d6"/><rect x="539" y="209" width="1" height="87" fill="#d6d6d6"/><rect x="592" y="209" width="1" height="87" fill="#d6d6d6"/><rect x="645" y="209" width="1" height="87" fill="#d6d6d6"/><rect x="699" y="209" width="1" height="87" fill="#d6d6d6"/><rect x="752" y="209" width="1" height="87" fill="#d6d6d6"/><rect x="805" y="209" width="1" height="87" fill="#d6d6d6"/><rect x="859" y="209" width="1" height="87" fill="#d6d6d6"/><rect x="315" y="252" width="556" height="1" fill="#d6d6d6"/><polyline points="325.50,252.50 336.30,236.31 347.10,222.92 357.90,214.65 368.70,212.92 379.50,218.03 390.10,229.11 400.70,244.23 411.30,260.77 421.90,275.89 432.50,286.97 443.10,292.08 453.70,290.35 464.30,282.08 474.90,268.69 485.50,252.50 496.30,236.31 507.10,222.92 517.90,214.65 528.70,212.92 539.50,218.03 550.10,229.11 560.70,244.23 571.30,260.77 581.90,275.89 592.50,286.97 603.10,292.08 613.70,290.35 624.30,282.08 634.90,268.69 645.50,252.50 656.30,236.31 667.10,222.92 677.90,214.65 688.70,212.92 699.50,218.03 710.10,229.11 720.70,244.23 731.30,260.77 741.90,275.89 752.50,286.97 763.10,292.08 773.70,290.35 784.30,282.08 794.90,268.69 805.50,252.50 816.30,236.31 827.10,222.92 837.90,214.65 848.70,212.92 859.50,218.03" fill="none" stroke="#ff2a00" stroke-width="2" stroke-linejoin="round"/><rect x="325" y="296" width="1" height="86" fill="#d6d6d6"/><rect x="379" y="296" width="1" height="86" fill="#d6d6d6"/><rect x="432" y="296" width="1" height="86" fill="#d6d6d6"/><rect x="485" y="296" width="1" height="86" fill="#d6d6d6"/><rect x="539" y="296" width="1" height="86" fill="#d6d6d6"/><rect x="592" y="296" width="1" height="86" fill="#d6d6d6"/><rect x="645" y="296" width="1" height="86" fill="#d6d6d6"/><rect x="699" y="296" width="1" height="86" fill="#d6d6d6"/><rect x="752" y="296" width="1" height="86" fill="#d6d6d6"/><rect x="805" y="296" width="1" height="86" fill="#d6d6d6"/><rect x="859" y="296" width="1" height="86" fill="#d6d6d6"/><rect x="315" y="338" width="556" height="1" fill="#d6d6d6"/><polyline points="325.50,338.50 336.30,375.72 347.10,300.56 357.90,299.99 368.70,372.70 379.50,326.36 390.10,366.81 400.70,300.97 411.30,303.83 421.90,347.79 432.50,301.12 443.10,328.25 453.70,335.54 464.30,347.79 474.90,301.78 485.50,326.36 496.30,302.14 507.10,377.19 517.90,370.58 528.70,343.92 539.50,375.88 550.10,374.27 560.70,304.30 571.30,299.25 581.90,350.17 592.50,299.20 603.10,306.42 613.70,371.41 624.30,377.55 634.90,334.06 645.50,375.88 656.30,377.19 667.10,299.20 677.90,311.24 688.70,313.07 699.50,326.36 710.10,313.83 720.70,353.43 731.30,317.86 741.90,371.41 752.50,301.12 763.10,305.06 773.70,377.43 784.30,362.00 794.90,373.17 805.50,326.36 816.30,330.65 827.10,365.04 837.90,375.22 848.70,362.00 859.50,338.50" fill="none" stroke="#ff14b0" stroke-width="2" stroke-linejoin="round"/><rect x="325" y="381" width="1" height="87" fill="#d6d6d6"/><rect x="379" y="381" width="1" height="87" fill="#d6d6d6"/><rect x="432" y="381" width="1" height="87" fill="#d6d6d6"/><rect x="485" y="381" width="1" height="87" fill="#d6d6d6"/><rect x="539" y="381" width="1" height="87" fill="#d6d6d6"/><rect x="592" y="381" width="1" height="87" fill="#d6d6d6"/><rect x="645" y="381" width="1" height="87" fill="#d6d6d6"/><rect x="699" y="381" width="1" height="87" fill="#d6d6d6"/><rect x="752" y="381" width="1" height="87" fill="#d6d6d6"/><rect x="805" y="381" width="1" height="87" fill="#d6d6d6"/><rect x="859" y="381" width="1" height="87" fill="#d6d6d6"/><rect x="315" y="424" width="556" height="1" fill="#d6d6d6"/><polyline points="325.50,464.10 336.30,464.10 347.10,464.10 357.90,464.10 368.70,464.10 379.50,464.10 390.10,464.10 400.70,464.10 411.30,384.90 421.90,384.90 432.50,384.90 443.10,384.90 453.70,384.90 464.30,384.90 474.90,384.90 485.50,464.10 496.30,464.10 507.10,464.10 517.90,464.10 528.70,464.10 539.50,464.10 550.10,464.10 560.70,464.10 571.30,384.90 581.90,384.90 592.50,384.90 603.10,384.90 613.70,384.90 624.30,384.90 634.90,384.90 645.50,464.10 656.30,464.10 667.10,464.10 677.90,464.10 688.70,464.10 699.50,464.10 710.10,464.10 720.70,464.10 731.30,384.90 741.90,384.90 752.50,384.90 763.10,384.90 773.70,384.90 784.30,384.90 794.90,384.90 805.50,464.10 816.30,464.10 827.10,464.10 837.90,464.10 848.70,464.10 859.50,464.10" fill="none" stroke="#21b26b" stroke-width="2" stroke-linejoin="round"/><rect x="315" y="252" width="4" height="1" fill="#222"/><rect x="315" y="338" width="4" height="1" fill="#222"/><rect x="315" y="424" width="4" height="1" fill="#222"/><g fill="#262626" shape-rendering="crispEdges"><rect x="315" y="209" width="556" height="1"/><rect x="315" y="468" width="556" height="1"/><rect x="315" y="209" width="1" height="260"/><rect x="870" y="209" width="1" height="260"/><rect x="315" y="296" width="556" height="1"/><rect x="315" y="381" width="556" height="1"/></g><rect x="325" y="465" width="1" height="3" fill="#222"/><rect x="379" y="465" width="1" height="3" fill="#222"/><rect x="432" y="465" width="1" height="3" fill="#222"/><rect x="485" y="465" width="1" height="3" fill="#222"/><rect x="539" y="465" width="1" height="3" fill="#222"/><rect x="592" y="465" width="1" height="3" fill="#222"/><rect x="645" y="465" width="1" height="3" fill="#222"/><rect x="699" y="465" width="1" height="3" fill="#222"/><rect x="752" y="465" width="1" height="3" fill="#222"/><rect x="805" y="465" width="1" height="3" fill="#222"/><rect x="859" y="465" width="1" height="3" fill="#222"/></svg>
<div class="t" style="left:322.08px;top:209.69px;font-size:10.40px;line-height:14px;letter-spacing:0.000px;color:#2a2a2a;font-weight:normal;">2</div>
<div class="t" style="left:322.38px;top:244.89px;font-size:10.40px;line-height:14px;letter-spacing:0.000px;color:#2a2a2a;font-weight:normal;">0</div>
<div class="b" style="left:317px;top:223px;width:8px;height:8px;background:#ff2a00"></div>
<div class="t" style="left:328.90px;top:218.74px;font-size:12.00px;line-height:16px;letter-spacing:0.075px;color:#333;font-weight:normal;color:#404040;text-shadow:1px 0 #fff,-1px 0 #fff,0 1px #fff,0 -1px #fff,1px 1px #fff,-1px -1px #fff,1px -1px #fff,-1px 1px #fff">Sine Wave</div>
<div class="t" style="left:322.67px;top:295.99px;font-size:10.40px;line-height:14px;letter-spacing:0.000px;color:#2a2a2a;font-weight:normal;">1</div>
<div class="t" style="left:322.38px;top:330.89px;font-size:10.40px;line-height:14px;letter-spacing:0.000px;color:#2a2a2a;font-weight:normal;">0</div>
<div class="b" style="left:317px;top:310px;width:8px;height:8px;background:#ff14b0"></div>
<div class="t" style="left:328.90px;top:305.04px;font-size:12.00px;line-height:16px;letter-spacing:0.067px;color:#333;font-weight:normal;color:#404040;text-shadow:1px 0 #fff,-1px 0 #fff,0 1px #fff,0 -1px #fff,1px 1px #fff,-1px -1px #fff,1px -1px #fff,-1px 1px #fff">Chirp Signal</div>
<div class="t" style="left:322.67px;top:381.29px;font-size:10.40px;line-height:14px;letter-spacing:0.000px;color:#2a2a2a;font-weight:normal;">1</div>
<div class="t" style="left:322.38px;top:416.89px;font-size:10.40px;line-height:14px;letter-spacing:0.000px;color:#2a2a2a;font-weight:normal;">0</div>
<div class="b" style="left:317px;top:395px;width:8px;height:8px;background:#21b26b"></div>
<div class="t" style="left:328.90px;top:390.34px;font-size:12.00px;line-height:16px;letter-spacing:-0.016px;color:#333;font-weight:normal;color:#404040;text-shadow:1px 0 #fff,-1px 0 #fff,0 1px #fff,0 -1px #fff,1px 1px #fff,-1px -1px #fff,1px -1px #fff,-1px 1px #fff">Square Wave</div>
<div class="t" style="left:310.50px;top:450.59px;width:30px;text-align:center;font-size:10.4px;letter-spacing:0px;line-height:14px;color:#2a2a2a">0</div>
<div class="t" style="left:364.50px;top:450.59px;width:30px;text-align:center;font-size:10.4px;letter-spacing:0px;line-height:14px;color:#2a2a2a">1</div>
<div class="t" style="left:417.50px;top:450.59px;width:30px;text-align:center;font-size:10.4px;letter-spacing:0px;line-height:14px;color:#2a2a2a">2</div>
<div class="t" style="left:470.50px;top:450.59px;width:30px;text-align:center;font-size:10.4px;letter-spacing:0px;line-height:14px;color:#2a2a2a">3</div>
<div class="t" style="left:524.50px;top:450.59px;width:30px;text-align:center;font-size:10.4px;letter-spacing:0px;line-height:14px;color:#2a2a2a">4</div>
<div class="t" style="left:577.50px;top:450.59px;width:30px;text-align:center;font-size:10.4px;letter-spacing:0px;line-height:14px;color:#2a2a2a">5</div>
<div class="t" style="left:630.50px;top:450.59px;width:30px;text-align:center;font-size:10.4px;letter-spacing:0px;line-height:14px;color:#2a2a2a">6</div>
<div class="t" style="left:684.50px;top:450.59px;width:30px;text-align:center;font-size:10.4px;letter-spacing:0px;line-height:14px;color:#2a2a2a">7</div>
<div class="t" style="left:737.50px;top:450.59px;width:30px;text-align:center;font-size:10.4px;letter-spacing:0px;line-height:14px;color:#2a2a2a">8</div>
<div class="t" style="left:790.50px;top:450.59px;width:30px;text-align:center;font-size:10.4px;letter-spacing:0px;line-height:14px;color:#2a2a2a">9</div>
<div class="t" style="left:844.80px;top:450.59px;width:30px;text-align:center;font-size:10.4px;letter-spacing:-0.6px;line-height:14px;color:#2a2a2a">10</div>
<div class="b" style="left:314px;top:473px;width:534px;height:260px;background:#fff;border:1px solid #7a7a7a"></div>
<div class="b" style="left:315px;top:474px;width:40px;height:258px;background:#c0c0c0"></div>
<div class="b" style="left:356px;top:474px;width:119px;height:26px;background:#f3f3f3"></div>
<div class="b" style="left:476px;top:474px;width:119px;height:26px;background:#c75c48"></div>
<div class="b" style="left:596px;top:474px;width:119px;height:26px;background:#d04c9c"></div>
<div class="b" style="left:716px;top:474px;width:119px;height:26px;background:#5aa07c"></div>
<div class="b" style="left:836px;top:474px;width:11px;height:258px;background:#f0f0f0"></div>
<svg class="b" style="left:0;top:0" width="927" height="760"><rect x="355" y="474" width="1" height="258" fill="#7a7a7a"/><rect x="475" y="474" width="1" height="258" fill="#7a7a7a"/><rect x="595" y="474" width="1" height="258" fill="#7a7a7a"/><rect x="715" y="474" width="1" height="258" fill="#7a7a7a"/><rect x="835" y="474" width="1" height="258" fill="#7a7a7a"/><rect x="315" y="500" width="521" height="1" fill="#7a7a7a"/><rect x="315" y="522" width="521" height="1" fill="#7a7a7a"/><rect x="315" y="544" width="521" height="1" fill="#7a7a7a"/><rect x="315" y="566" width="521" height="1" fill="#7a7a7a"/><rect x="315" y="588" width="521" height="1" fill="#7a7a7a"/><rect x="315" y="610" width="521" height="1" fill="#7a7a7a"/><rect x="315" y="632" width="521" height="1" fill="#7a7a7a"/><rect x="315" y="654" width="521" height="1" fill="#7a7a7a"/><rect x="315" y="676" width="521" height="1" fill="#7a7a7a"/><rect x="315" y="698" width="521" height="1" fill="#7a7a7a"/><rect x="315" y="720" width="521" height="1" fill="#7a7a7a"/></svg>
<div class="t" style="left:398.08px;top:478.86px;font-size:13.08px;line-height:17px;transform:scaleX(0.9328);transform-origin:0 0;color:#111;font-weight:bold;-webkit-text-stroke:0 #111;">Time</div>
<div class="t" style="left:502.24px;top:478.86px;font-size:13.08px;line-height:17px;transform:scaleX(0.9095);transform-origin:0 0;color:#fff;font-weight:bold;-webkit-text-stroke:0 #fff;">Sine Wave</div>
<div class="t" style="left:617.22px;top:478.86px;font-size:13.08px;line-height:17px;transform:scaleX(0.9086);transform-origin:0 0;color:#fff;font-weight:bold;-webkit-text-stroke:0 #fff;">Chirp Signal</div>
<div class="t" style="left:735.04px;top:478.86px;font-size:13.08px;line-height:17px;transform:scaleX(0.9116);transform-origin:0 0;color:#fff;font-weight:bold;-webkit-text-stroke:0 #fff;">Square Wave</div>
<div class="b" style="left:0;top:474px;width:848px;height:258px;overflow:hidden">
<div class="t" style="left:331.28px;top:29.86px;font-size:11.93px;line-height:16px;letter-spacing:-0.200px;color:#333;font-weight:normal;">1</div>
<div class="t" style="left:358.62px;top:29.86px;font-size:11.93px;line-height:16px;letter-spacing:-0.200px;color:#484848;font-weight:normal;">0</div>
<div class="t" style="left:478.32px;top:29.86px;font-size:11.93px;line-height:16px;letter-spacing:-0.200px;color:#484848;font-weight:normal;">0</div>
<div class="t" style="left:598.32px;top:29.86px;font-size:11.93px;line-height:16px;letter-spacing:-0.200px;color:#484848;font-weight:normal;">0</div>
<div class="t" style="left:718.32px;top:29.86px;font-size:11.93px;line-height:16px;letter-spacing:-0.200px;color:#484848;font-weight:normal;">-1</div>
<div class="t" style="left:331.46px;top:51.86px;font-size:11.93px;line-height:16px;letter-spacing:-0.200px;color:#333;font-weight:normal;">2</div>
<div class="t" style="left:358.62px;top:51.86px;font-size:11.93px;line-height:16px;letter-spacing:-0.200px;color:#484848;font-weight:normal;">0.2</div>
<div class="t" style="left:478.32px;top:51.86px;font-size:11.93px;line-height:16px;letter-spacing:-0.200px;color:#484848;font-weight:normal;">0.8134732861516003</div>
<div class="t" style="left:598.32px;top:51.86px;font-size:11.93px;line-height:16px;letter-spacing:-0.200px;color:#484848;font-weight:normal;">-0.9470983049947...</div>
<div class="t" style="left:718.32px;top:51.86px;font-size:11.93px;line-height:16px;letter-spacing:-0.200px;color:#484848;font-weight:normal;">-1</div>
<div class="t" style="left:331.52px;top:73.86px;font-size:11.93px;line-height:16px;letter-spacing:-0.200px;color:#333;font-weight:normal;">3</div>
<div class="t" style="left:358.62px;top:73.86px;font-size:11.93px;line-height:16px;letter-spacing:-0.200px;color:#484848;font-weight:normal;">0.4</div>
<div class="t" style="left:477.85px;top:73.86px;font-size:11.93px;line-height:16px;letter-spacing:-0.200px;color:#484848;font-weight:normal;">1.4862896509547885</div>
<div class="t" style="left:598.32px;top:73.86px;font-size:11.93px;line-height:16px;letter-spacing:-0.200px;color:#484848;font-weight:normal;">0.965381638833278</div>
<div class="t" style="left:718.32px;top:73.86px;font-size:11.93px;line-height:16px;letter-spacing:-0.200px;color:#484848;font-weight:normal;">-1</div>
<div class="t" style="left:331.52px;top:95.86px;font-size:11.93px;line-height:16px;letter-spacing:-0.200px;color:#333;font-weight:normal;">4</div>
<div class="t" style="left:358.62px;top:95.86px;font-size:11.93px;line-height:16px;letter-spacing:-0.200px;color:#484848;font-weight:normal;">0.6</div>
<div class="t" style="left:477.85px;top:95.86px;font-size:11.93px;line-height:16px;letter-spacing:-0.200px;color:#484848;font-weight:normal;">1.902113032590307</div>
<div class="t" style="left:598.32px;top:95.86px;font-size:11.93px;line-height:16px;letter-spacing:-0.200px;color:#484848;font-weight:normal;">0.9798550523842596</div>
<div class="t" style="left:718.32px;top:95.86px;font-size:11.93px;line-height:16px;letter-spacing:-0.200px;color:#484848;font-weight:normal;">-1</div>
<div class="t" style="left:331.52px;top:117.86px;font-size:11.93px;line-height:16px;letter-spacing:-0.200px;color:#333;font-weight:normal;">5</div>
<div class="t" style="left:358.62px;top:117.86px;font-size:11.93px;line-height:16px;letter-spacing:-0.200px;color:#484848;font-weight:normal;">0.8</div>
<div class="t" style="left:477.85px;top:117.86px;font-size:11.93px;line-height:16px;letter-spacing:-0.200px;color:#484848;font-weight:normal;">1.9890437907365468</div>
<div class="t" style="left:598.32px;top:117.86px;font-size:11.93px;line-height:16px;letter-spacing:-0.200px;color:#484848;font-weight:normal;">-0.870183754669513</div>
<div class="t" style="left:718.32px;top:117.86px;font-size:11.93px;line-height:16px;letter-spacing:-0.200px;color:#484848;font-weight:normal;">-1</div>
<div class="t" style="left:331.46px;top:139.86px;font-size:11.93px;line-height:16px;letter-spacing:-0.200px;color:#333;font-weight:normal;">6</div>
<div class="t" style="left:358.15px;top:139.86px;font-size:11.93px;line-height:16px;letter-spacing:-0.200px;color:#484848;font-weight:normal;">1</div>
<div class="t" style="left:477.85px;top:139.86px;font-size:11.93px;line-height:16px;letter-spacing:-0.200px;color:#484848;font-weight:normal;">1.7320508075688774</div>
<div class="t" style="left:598.32px;top:139.86px;font-size:11.93px;line-height:16px;letter-spacing:-0.200px;color:#484848;font-weight:normal;">0.30901699437493...</div>
<div class="t" style="left:718.32px;top:139.86px;font-size:11.93px;line-height:16px;letter-spacing:-0.200px;color:#484848;font-weight:normal;">-1</div>
<div class="t" style="left:331.46px;top:161.86px;font-size:11.93px;line-height:16px;letter-spacing:-0.200px;color:#333;font-weight:normal;">7</div>
<div class="t" style="left:358.15px;top:161.86px;font-size:11.93px;line-height:16px;letter-spacing:-0.200px;color:#484848;font-weight:normal;">1.2</div>
<div class="t" style="left:477.85px;top:161.86px;font-size:11.93px;line-height:16px;letter-spacing:-0.200px;color:#484848;font-weight:normal;">1.1755705045849465</div>
<div class="t" style="left:598.32px;top:161.86px;font-size:11.93px;line-height:16px;letter-spacing:-0.200px;color:#484848;font-weight:normal;">-0.7203090248878...</div>
<div class="t" style="left:718.32px;top:161.86px;font-size:11.93px;line-height:16px;letter-spacing:-0.200px;color:#484848;font-weight:normal;">-1</div>
<div class="t" style="left:331.52px;top:183.86px;font-size:11.93px;line-height:16px;letter-spacing:-0.200px;color:#333;font-weight:normal;">8</div>
<div class="t" style="left:358.15px;top:183.86px;font-size:11.93px;line-height:16px;letter-spacing:-0.200px;color:#484848;font-weight:normal;">1.4</div>
<div class="t" style="left:478.32px;top:183.86px;font-size:11.93px;line-height:16px;letter-spacing:-0.200px;color:#484848;font-weight:normal;">0.41582338163551...</div>
<div class="t" style="left:598.32px;top:183.86px;font-size:11.93px;line-height:16px;letter-spacing:-0.200px;color:#484848;font-weight:normal;">0.9548645447466385</div>
<div class="t" style="left:718.32px;top:183.86px;font-size:11.93px;line-height:16px;letter-spacing:-0.200px;color:#484848;font-weight:normal;">-1</div>
<div class="t" style="left:331.46px;top:205.86px;font-size:11.93px;line-height:16px;letter-spacing:-0.200px;color:#333;font-weight:normal;">9</div>
<div class="t" style="left:358.15px;top:205.86px;font-size:11.93px;line-height:16px;letter-spacing:-0.200px;color:#484848;font-weight:normal;">1.6</div>
<div class="t" style="left:478.32px;top:205.86px;font-size:11.93px;line-height:16px;letter-spacing:-0.200px;color:#484848;font-weight:normal;">-0.4158233816355...</div>
<div class="t" style="left:598.32px;top:205.86px;font-size:11.93px;line-height:16px;letter-spacing:-0.200px;color:#484848;font-weight:normal;">0.8822912264349403</div>
<div class="t" style="left:717.85px;top:205.86px;font-size:11.93px;line-height:16px;letter-spacing:-0.200px;color:#484848;font-weight:normal;">1</div>
<div class="t" style="left:327.94px;top:227.86px;font-size:11.93px;line-height:16px;letter-spacing:-0.200px;color:#333;font-weight:normal;">10</div>
<div class="t" style="left:358.15px;top:227.86px;font-size:11.93px;line-height:16px;letter-spacing:-0.200px;color:#484848;font-weight:normal;">1.8</div>
<div class="t" style="left:478.32px;top:227.86px;font-size:11.93px;line-height:16px;letter-spacing:-0.200px;color:#484848;font-weight:normal;">-1.175570504584946</div>
<div class="t" style="left:598.32px;top:227.86px;font-size:11.93px;line-height:16px;letter-spacing:-0.200px;color:#484848;font-weight:normal;">-0.2364989970236...</div>
<div class="t" style="left:717.85px;top:227.86px;font-size:11.93px;line-height:16px;letter-spacing:-0.200px;color:#484848;font-weight:normal;">1</div>
<div class="t" style="left:328.42px;top:249.86px;font-size:11.93px;line-height:16px;letter-spacing:-0.200px;color:#333;font-weight:normal;">11</div>
<div class="t" style="left:358.50px;top:249.86px;font-size:11.93px;line-height:16px;letter-spacing:-0.200px;color:#484848;font-weight:normal;">2</div>
<div class="t" style="left:478.32px;top:249.86px;font-size:11.93px;line-height:16px;letter-spacing:-0.200px;color:#484848;font-weight:normal;">-1.732050807568877</div>
<div class="t" style="left:598.32px;top:249.86px;font-size:11.93px;line-height:16px;letter-spacing:-0.200px;color:#484848;font-weight:normal;">0.9510565162951333</div>
<div class="t" style="left:717.85px;top:249.86px;font-size:11.93px;line-height:16px;letter-spacing:-0.200px;color:#484848;font-weight:normal;">1</div>
</div>
<svg class="b" style="left:836px;top:501px" width="11" height="8" viewBox="0 0 11 8"><path d="M0.5,7.5 L5.5,0.5 L10.5,7.5Z" fill="#c8c8c8"/></svg>
<div class="b" style="left:837px;top:510px;width:8px;height:41px;background:#c2c2c2;border-radius:4px"></div>
<svg class="b" style="left:836px;top:724px" width="11" height="8" viewBox="0 0 11 8"><path d="M0.5,0.5 L5.5,7.5 L10.5,0.5Z" fill="#c8c8c8"/></svg>
<div class="b" style="left:848px;top:471px;width:45px;height:264px;background:#f7f7f7"></div>
<div class="t" style="left:6.93px;top:740.91px;font-size:12.65px;line-height:16px;transform:scaleX(0.8612);transform-origin:0 0;color:#111;font-weight:normal;-webkit-text-stroke:0.2px #111;">Ready</div>
<div class="t" style="left:465.04px;top:740.91px;font-size:12.65px;line-height:16px;transform:scaleX(0.8524);transform-origin:0 0;color:#222;font-weight:normal;-webkit-text-stroke:0.2px #222;">100%</div>
<div class="t" style="left:762.74px;top:740.91px;font-size:12.65px;line-height:16px;transform:scaleX(0.9171);transform-origin:0 0;color:#1f1f8c;font-weight:normal;-webkit-text-stroke:0.2px #1f1f8c;">auto(VariableStepDiscrete)</div>
<div class="b" style="left:907px;top:739px;width:1px;height:18px;background:#d0d0d0"></div>
<svg class="b" style="left:915px;top:749px" width="9" height="9" viewBox="0 0 9 9"><rect x="6" y="0" width="2" height="2" fill="#b4b4b4"/><rect x="3" y="3" width="2" height="2" fill="#b4b4b4"/><rect x="6" y="3" width="2" height="2" fill="#b4b4b4"/><rect x="0" y="6" width="2" height="2" fill="#b4b4b4"/><rect x="3" y="6" width="2" height="2" fill="#b4b4b4"/><rect x="6" y="6" width="2" height="2" fill="#b4b4b4"/></svg>
</body></html>
